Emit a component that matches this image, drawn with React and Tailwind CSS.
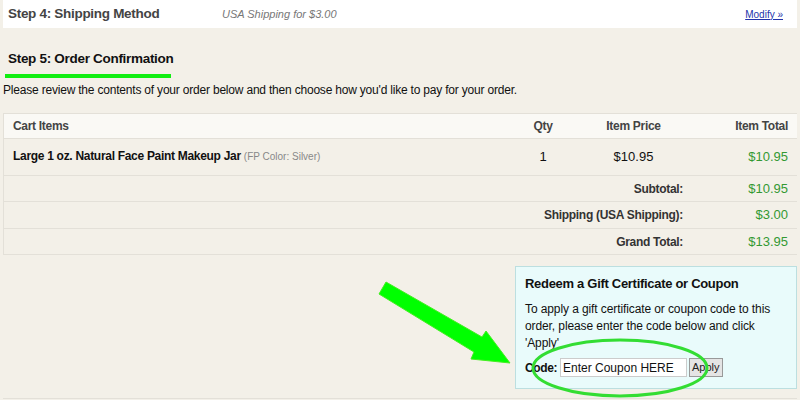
import React from 'react';

const cond = { fontFamily: '"Liberation Sans", Arial, sans-serif', letterSpacing: '-0.3px' };

const rows = [
  { label: 'Subtotal:', value: '$10.95', h: 'h-[26px]' },
  { label: 'Shipping (USA Shipping):', value: '$3.00', h: 'h-[27px]' },
  { label: 'Grand Total:', value: '$13.95', h: 'h-[26px]' },
];

export default function App() {
  return (
    <div className="relative w-[800px] h-[400px] overflow-hidden bg-[#f3f0e8] text-[#111] font-['Liberation_Sans',Arial,sans-serif]">
      {/* Step 4 summary bar */}
      <div className="mx-[3px] h-[28px] bg-white flex items-center px-[5px]">
        <span style={cond} className="w-[214px] font-bold text-[13.5px] text-[#444]">Step 4: Shipping Method</span>
        <span className="italic text-[11px] text-[#777]">USA Shipping for $3.00</span>
        <a href="#" className="ml-auto mr-[9px] text-[10px] text-[#2233aa] underline">Modify »</a>
      </div>

      {/* Step 5 heading */}
      <div className="pt-[21px] pl-[8px]">
        <h2 style={cond} className="font-bold text-[13.5px] leading-[20px] text-[#111]">Step 5: Order Confirmation</h2>
      </div>
      <div className="ml-[5px] mt-[5px] w-[166px] h-[4px] bg-[#11ee11]" />
      <p className="pl-[3px] mt-[5px] text-[12px] leading-[14px] tracking-[-0.2px]">
        Please review the contents of your order below and then choose how you'd like to pay for your order.
      </p>

      {/* Cart table */}
      <table style={cond} className="mx-[3px] mt-[16px] w-[794px] border-collapse border-l border-[#e3e0d8] table-fixed">
        <colgroup>
          <col />
          <col className="w-[80px]" />
          <col className="w-[101px]" />
          <col className="w-[113px]" />
        </colgroup>
        <thead>
          <tr className="h-[25px] bg-[#faf9f5] border-y border-[#e3e0d8] text-[12px] text-[#444]">
            <th className="text-left pl-[9px] font-bold">Cart Items</th>
            <th className="text-center font-bold">Qty</th>
            <th className="text-center font-bold">Item Price</th>
            <th className="text-right pr-[9px] font-bold">Item Total</th>
          </tr>
        </thead>
        <tbody>
          <tr className="h-[37px] border-b border-[#e3e0d8] align-top">
            <td className="pl-[9px] pt-[8px] text-[12px] font-bold text-[#111]">
              Large 1 oz. Natural Face Paint Makeup Jar{' '}
              <span className="font-normal text-[10px] text-[#888] tracking-normal">(FP Color: Silver)</span>
            </td>
            <td className="pt-[8px] text-center text-[13px] tracking-normal">1</td>
            <td className="pt-[8px] text-center text-[13px] tracking-normal">$10.95</td>
            <td className="pt-[8px] pr-[9px] text-right text-[13px] text-[#339933] tracking-normal">$10.95</td>
          </tr>
          {rows.map((r) => (
            <tr key={r.label} className={`${r.h} border-b border-[#e3e0d8]`}>
              <td colSpan={3} className="text-right text-[12px] font-bold text-[#333] pr-[1px]">{r.label}</td>
              <td className="pr-[9px] text-right text-[13px] text-[#339933] tracking-normal">{r.value}</td>
            </tr>
          ))}
        </tbody>
      </table>

      {/* Coupon box */}
      <div className="flex justify-end mt-[11px] mr-[3px]">
        <div className="w-[282px] h-[123px] bg-[#e9fbfb] border border-[#bcdfe0] px-[9px] pt-[9px]">
          <h3 className="font-bold text-[13px] leading-[16px] tracking-[-0.3px] text-[#111]">Redeem a Gift Certificate or Coupon</h3>
          <p className="mt-[9px] text-[12px] leading-[17px] tracking-[-0.1px] text-[#111]">
            To apply a gift certificate or coupon code to this order, please enter the code below and click 'Apply'
          </p>
          <div className="mt-[6px] flex items-center text-[12px]">
            <span className="font-bold tracking-[-0.4px]">Code:</span>
            <input
              defaultValue="Enter Coupon HERE"
              className="ml-[3px] w-[127px] h-[19px] bg-white border border-[#ccc] px-[2px] text-[12px] text-[#111] outline-none"
            />
            <button className="ml-[2px] h-[19px] px-[2px] bg-[#e4e4e4] border border-[#999] text-[11px] text-[#222]">Apply</button>
          </div>
        </div>
      </div>
      <div className="mx-[3px] mt-[9px] h-px bg-[#e3e0d8]" />

      {/* annotation overlay: arrow + ellipse */}
      <svg className="absolute inset-0 pointer-events-none" width="800" height="400" viewBox="0 0 800 400">
        <polygon
          points="386,282 379,294 474,352 471,359 510,363 486,331 482,337"
          fill="#00ff00"
          stroke="#44ee22"
          strokeWidth="1"
        />
        <ellipse cx="620" cy="368" rx="87" ry="28" fill="none" stroke="#33dd33" strokeWidth="3" />
      </svg>
    </div>
  );
}
